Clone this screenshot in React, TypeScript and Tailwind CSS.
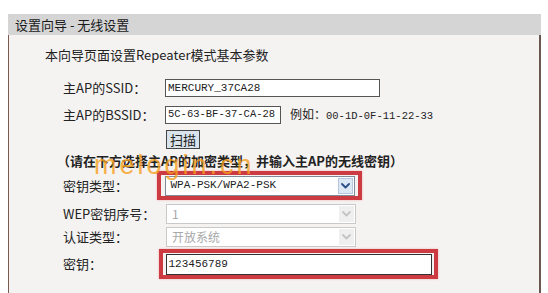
import React from 'react';

const cjk = "font-['Noto_Sans_CJK_SC',sans-serif]";
const mono = "font-['Liberation_Mono','Noto_Sans_CJK_SC',monospace]";

function Chevron({ disabled }: { disabled?: boolean }) {
    return (
        <svg width="9" height="6" viewBox="0 0 9 6" fill="none">
            <path
                d="M1 1l3.5 3.5L8 1"
                stroke={disabled ? '#c4c4c4' : '#2a4f86'}
                strokeWidth="1.8"
                strokeLinecap="round"
                strokeLinejoin="round"
            />
        </svg>
    );
}

function Select({ value, disabled }: { value: string; disabled?: boolean }) {
    return (
        <div
            className={`flex h-[20px] w-[190px] items-center border ${
                disabled ? 'border-[#c9c9c9]' : 'border-[#7f8a99]'
            } bg-white`}
        >
            <span
                className={`flex-1 whitespace-nowrap pl-[5px] leading-none ${
                    disabled ? `${cjk} text-[12px] text-[#a8a8a8]` : `${mono} text-[11px] text-[#222]`
                }`}
            >
                {value}
            </span>
            <div
                className={`mr-[1px] flex h-[16px] w-[15px] items-center justify-center ${
                    disabled ? 'bg-[#efefef]' : 'border border-[#b5c7df] bg-[#dde8f5]'
                }`}
            >
                <Chevron disabled={disabled} />
            </div>
        </div>
    );
}

export default function App() {
    return (
        <div className={`relative h-[293px] w-[548px] overflow-hidden bg-white ${cjk} text-[13px] text-[#222]`}>
            <div className="ml-[8px] mt-[14px] w-[533px]">
                {/* Header */}
                <div className="flex h-[21px] items-center bg-[#d5d5d5] pl-[7px] text-[13px] leading-none text-[#1a1a1a]">
                    设置向导 - 无线设置
                </div>

                {/* Body */}
                <div className="h-[270px] border-l border-r-2 border-l-[#7d5a50] border-r-[#6b5752] bg-[#f5f3f2]">
                    <div className="pl-[36px] pt-[12px] leading-[16px]">本向导页面设置Repeater模式基本参数</div>

                    <div className="mt-[16px] flex h-[18px] items-center pl-[54px]">
                        <span className="w-[102px]">主AP的SSID：</span>
                        <div className={`flex h-[18px] w-[215px] items-center whitespace-nowrap border border-[#555] bg-white pl-[2px] ${mono} text-[11px]`}>
                            MERCURY_37CA28
                        </div>
                    </div>

                    <div className="mt-[9px] flex h-[18px] items-center pl-[54px]">
                        <span className="w-[102px]">主AP的BSSID：</span>
                        <div className={`flex h-[18px] w-[116px] items-center overflow-hidden whitespace-nowrap border border-[#555] bg-white pl-[2px] ${mono} text-[10.5px]`}>
                            5C-63-BF-37-CA-28
                        </div>
                        <span className="ml-[9px] whitespace-nowrap text-[12px]">
                            例如：<span className={`${mono} text-[10.5px]`}>00-1D-0F-11-22-33</span>
                        </span>
                    </div>

                    <div className="mt-[6px] flex pl-[157px]">
                        <button className="flex h-[19px] w-[34px] items-center justify-center border border-[#444] bg-[#d8e3ec] text-[13px] leading-none">
                            扫描
                        </button>
                    </div>

                    <div className="mt-[4px] pl-[48px] font-semibold leading-[16px]">
                        （请在下方选择主AP的加密类型，并输入主AP的无线密钥）
                    </div>

                    <div className="mt-[2px] flex h-[29px] items-center pl-[54px]">
                        <span className="w-[94px]">密钥类型：</span>
                        <div className="flex h-[29px] w-[205px] items-center justify-center border-[4px] border-[#cc3a42] shadow-[0_0_2px_#f2a9ad]">
                            <Select value="WPA-PSK/WPA2-PSK" />
                        </div>
                    </div>

                    <div className="mt-[4px] flex h-[20px] items-center pl-[54px]">
                        <span className="w-[103px]">WEP密钥序号：</span>
                        <Select value="1" disabled />
                    </div>

                    <div className="mt-[3px] flex h-[20px] items-center pl-[54px]">
                        <span className="w-[103px]">认证类型：</span>
                        <Select value="开放系统" disabled />
                    </div>

                    <div className="mt-[2px] flex h-[30px] items-center pl-[54px]">
                        <span className="w-[96px]">密钥：</span>
                        <div className="flex h-[30px] w-[279px] items-center justify-center border-[4px] border-[#cc3a42] shadow-[0_0_2px_#f2a9ad]">
                            <div className={`flex h-[21px] w-[266px] items-center border border-[#333] bg-white pl-[2px] ${mono} text-[11px]`}>
                                123456789
                            </div>
                        </div>
                    </div>
                </div>
            </div>

            {/* Watermark */}
            <div className="pointer-events-none absolute left-[94px] top-[152px] whitespace-nowrap font-['Liberation_Sans',sans-serif] text-[27px] leading-none tracking-[3px] text-[#f5a020] opacity-80">
                melogin.cn
            </div>
        </div>
    );
}
